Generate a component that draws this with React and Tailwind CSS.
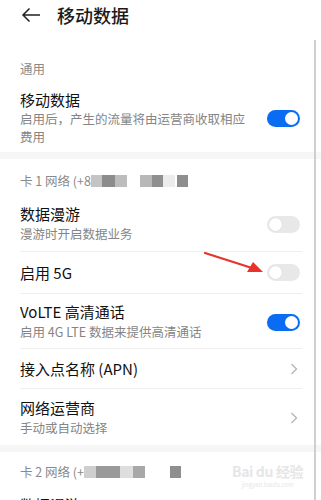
import React from 'react';

// 开关
function Toggle({ on }) {
  return on ? (
    <div className="w-[33px] h-[17px] rounded-full bg-[#0a6cf2] flex items-center justify-end pr-[2px]">
      <div className="w-[13px] h-[13px] rounded-full bg-white" />
    </div>
  ) : (
    <div className="w-[33px] h-[17px] rounded-full bg-[#e8e8e8] flex items-center pl-[2px]">
      <div className="w-[13px] h-[13px] rounded-full bg-white shadow-[0_0_1px_rgba(0,0,0,0.15)]" />
    </div>
  );
}

function Chevron() {
  return (
    <svg width="8" height="12" viewBox="0 0 8 12" fill="none">
      <path d="M1.5 1 L6.5 6 L1.5 11" stroke="#b4b4b4" strokeWidth="1.3" />
    </svg>
  );
}

function Divider() {
  return <div className="ml-[20px] mr-[19px] h-px bg-[#eeeeee]" />;
}

function Band() {
  return <div className="h-[7px] bg-[#f6f6f6]" />;
}

// 打码块
function Masked({ blocks }) {
  return (
    <div className="flex items-center">
      {blocks.map((b, i) => (
        <div key={i} className="h-[12px]" style={{ width: b[0], background: b[1] }} />
      ))}
    </div>
  );
}

function Label({ children, className }) {
  return (
    <div className={`px-[20px] text-[12.5px] leading-[20px] text-[#8a8a8a] ${className}`}>
      {children}
    </div>
  );
}

export default function App() {
  return (
    <div
      className="relative w-[321px] h-[500px] overflow-hidden bg-white"
      style={{ fontFamily: '"Noto Sans CJK SC", "Noto Sans", sans-serif' }}
    >
      {/* 顶栏 */}
      <div className="h-[30px] flex items-center pl-[21px]">
        <svg width="20" height="16" viewBox="0 0 20 16" fill="none">
          <path d="M19 8 H2 M8.5 1.5 L2 8 L8.5 14.5" stroke="#222" strokeWidth="1.5" />
        </svg>
        <span className="ml-[16px] text-[18px] leading-[24px] text-[#1a1a1a] font-medium">移动数据</span>
      </div>

      <Label className="mt-[26px] pt-[3px] pb-[3px]">通用</Label>

      <div className="flex items-center pl-[20px] pr-[21px] pt-[8px] pb-[6px]">
        <div className="flex-1">
          <div className="text-[15px] leading-[20px] text-[#111]">移动数据</div>
          <div className="text-[12.5px] leading-[18px] text-[#858585] w-[232px]">
            启用后，产生的流量将由运营商收取相应费用
          </div>
        </div>
        <Toggle on />
      </div>

      <Band />

      <Label className="pt-[12px] pb-[8px]">
        <div className="flex items-center">
          <span>卡 1 网络 (+8</span>
          <Masked
            blocks={[
              [11, '#c4c4c4'],
              [13, '#8c8c8c'],
              [12, '#bdbdbd'],
              [13, '#ffffff'],
              [12, '#b8b8b8'],
              [11, '#8f8f8f'],
              [12, '#ececec'],
              [2, '#ffffff'],
              [11, '#8e8e8e'],
            ]}
          />
        </div>
      </Label>

      <div className="flex items-center pl-[20px] pr-[21px] pt-[5px] pb-[7px]">
        <div className="flex-1">
          <div className="text-[15px] leading-[20px] text-[#111]">数据漫游</div>
          <div className="text-[12.5px] leading-[20px] text-[#858585]">漫游时开启数据业务</div>
        </div>
        <Toggle />
      </div>
      <Divider />

      <div className="h-[41px] flex items-center pl-[20px] pr-[21px]">
        <div className="flex-1 text-[15px] leading-[20px] text-[#111]">启用 5G</div>
        <Toggle />
      </div>
      <Divider />

      <div className="flex items-center pl-[20px] pr-[21px] pt-[8px] pb-[6px]">
        <div className="flex-1">
          <div className="text-[15px] leading-[20px] text-[#111]">VoLTE 高清通话</div>
          <div className="text-[12.5px] leading-[20px] text-[#858585]">启用 4G LTE 数据来提供高清通话</div>
        </div>
        <Toggle on />
      </div>
      <Divider />

      <div className="h-[39px] flex items-center pl-[20px] pr-[23px]">
        <div className="flex-1 text-[15px] leading-[20px] text-[#111]">接入点名称 (APN)</div>
        <Chevron />
      </div>
      <Divider />

      <div className="flex items-center pl-[20px] pr-[23px] pt-[9px] pb-[7px]">
        <div className="flex-1">
          <div className="text-[15px] leading-[20px] text-[#111]">网络运营商</div>
          <div className="text-[12.5px] leading-[20px] text-[#858585]">手动或自动选择</div>
        </div>
        <Chevron />
      </div>

      <Band />

      <Label className="pt-[10px] pb-[8px]">
        <div className="flex items-center">
          <span>卡 2 网络 (+</span>
          <Masked
            blocks={[
              [12, '#cfcfcf'],
              [24, '#9a9a9a'],
              [13, '#dedede'],
              [12, '#a8a8a8'],
              [25, '#ffffff'],
              [11, '#8e8e8e'],
            ]}
          />
        </div>
      </Label>

      <div className="flex items-center pl-[20px] pr-[21px] pt-[5px]">
        <div className="flex-1">
          <div className="text-[15px] leading-[20px] text-[#111]">数据漫游</div>
        </div>
      </div>

      {/* 百度经验水印 */}
      <div className="absolute left-[232px] top-[463px] flex flex-col items-center text-[#e6e6e6]">
        <div className="text-[14px] leading-[16px] font-bold tracking-tight">Bai du 经验</div>
        <div className="mt-[2px] text-[6px] leading-[8px]">jingyan.baidu.com</div>
      </div>

      {/* 红色箭头 */}
      <svg className="absolute left-0 top-0" width="321" height="500" fill="none">
        <path d="M205 253 L252 268" stroke="#e8322c" strokeWidth="2.2" strokeLinecap="round" />
        <path d="M263 272 L247 272 L253 262 Z" fill="#e8322c" />
      </svg>

      {/* 滚动条 */}
      <div className="absolute left-[314px] top-[40px] w-[2px] h-[460px] bg-[#cfcfcf]" />
    </div>
  );
}
